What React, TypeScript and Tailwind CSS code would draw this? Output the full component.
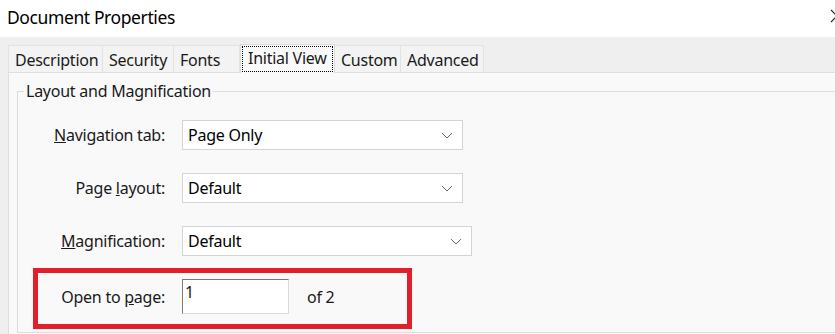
import React from 'react';

const font = { fontFamily: '"Noto Sans", "Open Sans", sans-serif' };

function Chevron() {
  return (
    <svg width="12" height="7" viewBox="0 0 12 7" className="shrink-0">
      <path d="M1 1 L6 6 L11 1" fill="none" stroke="#666" strokeWidth="1" />
    </svg>
  );
}

function Select({ value, width }: { value: string; width: string }) {
  return (
    <div className={`${width} h-[30px] bg-white border border-[#d4d4d4] flex items-center justify-between pl-[5px] pr-[9px]`}>
      <span className="text-[16px] text-black">{value}</span>
      <Chevron />
    </div>
  );
}

function Tab({ label, width, active }: { label: string; width: string; active?: boolean }) {
  if (active) {
    return (
      <div className={`${width} h-[29px] -mb-px bg-[#f9f9f9] border-t border-x border-[#dcdcdc] relative z-10 p-px`}>
        <div className="h-full border border-dotted border-black flex items-start pl-[5px] text-[16px] leading-[22px]">
          {label}
        </div>
      </div>
    );
  }
  return (
    <div className={`${width} h-[27px] bg-[#f3f3f3] border-t border-r border-[#e2e2e2] first:border-l flex items-center pl-[6px] text-[16px] pt-[1px]`}>
      {label}
    </div>
  );
}

export default function App() {
  return (
    <div className="w-[835px] h-[334px] overflow-hidden bg-white flex flex-col text-[#1a1a1a] tracking-[-0.25px]" style={font}>
      <div className="h-[37px] shrink-0 flex items-center justify-between pl-[7px] relative">
        <span className="text-[17.5px] tracking-[-0.4px] text-black -mt-[2px]">Document Properties</span>
        <svg width="14" height="14" viewBox="0 0 14 14" className="absolute left-[830px] top-[9px]">
          <path d="M1 1 L13 13 M13 1 L1 13" stroke="#222" strokeWidth="1.2" fill="none" />
        </svg>
      </div>
      <div className="flex-1 bg-[#efefef] pl-[8px] pt-[6px] flex flex-col">
        <div className="flex items-end h-[29px] shrink-0">
          <Tab label="Description" width="w-[95px]" />
          <Tab label="Security" width="w-[71px]" />
          <Tab label="Fonts" width="w-[66px]" />
          <Tab label="Initial View" width="w-[95px]" active />
          <Tab label="Custom" width="w-[66px]" />
          <Tab label="Advanced" width="w-[83px]" />
        </div>
        <div className="flex-1 bg-[#f9f9f9] border-l border-t border-[#dedede] pl-[8px] pt-[7px]">
          <fieldset className="border border-[#dcdcdc] border-r-0 h-[253px] pb-[2px]">
            <legend className="ml-[6px] px-[2px] text-[16px] leading-[22px] text-[#1a1a1a]">Layout and Magnification</legend>
            <div className="flex flex-col mt-[18px]">
              <div className="flex items-center h-[30px]">
                <div className="w-[147px] text-right text-[16px]"><u>N</u>avigation tab:</div>
                <div className="ml-[17px]"><Select value="Page Only" width="w-[281px]" /></div>
              </div>
              <div className="flex items-center h-[30px] mt-[23px]">
                <div className="w-[147px] text-right text-[16px]">Page <u>l</u>ayout:</div>
                <div className="ml-[17px]"><Select value="Default" width="w-[281px]" /></div>
              </div>
              <div className="flex items-center h-[30px] mt-[23px]">
                <div className="w-[147px] text-right text-[16px]"><u>M</u>agnification:</div>
                <div className="ml-[17px]"><Select value="Default" width="w-[290px]" /></div>
              </div>
              <div className="ml-[15px] mt-[12px] w-[379px] h-[61px] border-[5px] border-[#e21e2b] flex items-start pt-[6px]">
                <div className="w-[127px] text-right text-[16px] mt-[6px]">Open to <u>p</u>age:</div>
                <div className="ml-[17px] w-[107px] h-[35px] bg-white border border-[#dadada] border-t-[#7a7a7a] border-l-[#7a7a7a] pl-[2px] text-[16px] leading-[24px]">1</div>
                <div className="ml-[18px] text-[16px] mt-[6px]">of 2</div>
              </div>
            </div>
          </fieldset>
        </div>
      </div>
    </div>
  );
}
